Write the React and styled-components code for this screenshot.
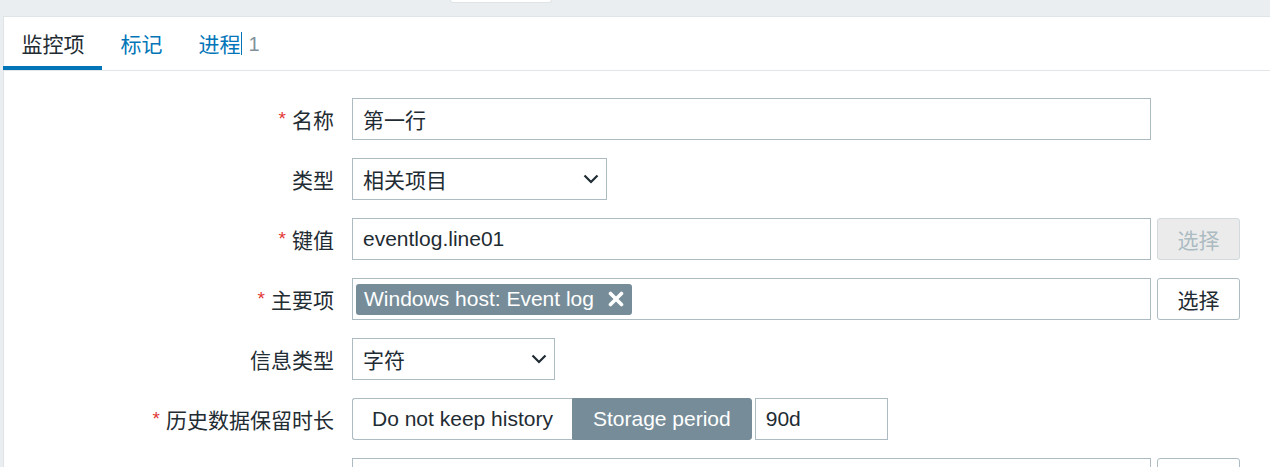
import React from 'react';
import styled, { createGlobalStyle } from 'styled-components';

const GlobalStyle = createGlobalStyle`
  html, body {
    margin: 0;
    padding: 0;
    background: #ebeef0;
    font-family: "Liberation Sans", "Noto Sans CJK SC", sans-serif;
    color: #1f2c33;
    overflow: hidden;
  }
`;

const TopStrip = styled.div`
  height: 16px;
  padding-left: 450px;
  box-sizing: border-box;
`;

const TopTab = styled.div`
  width: 100px;
  height: 2px;
  background: #ffffff;
  border: 1px solid #dfe4e7;
  border-top: none;
  border-radius: 0 0 3px 3px;
`;

const Panel = styled.div`
  margin-left: 3px;
  background: #ffffff;
  border-top: 1px solid #dfe4e7;
  border-left: 1px solid #dfe4e7;
  min-height: 460px;
`;

const TabBar = styled.div`
  display: flex;
  height: 54px;
  box-sizing: border-box;
  border-bottom: 1px solid #e3e6e8;
  margin-left: -1px;
`;

const Tab = styled.div`
  display: flex;
  align-items: center;
  height: 53px;
  box-sizing: border-box;
  padding: 3px 17.5px 0 18.5px;
  font-size: 21px;
  color: ${(p) => (p.$active ? '#1f2c33' : '#0275b8')};
  border-bottom: 4px solid ${(p) => (p.$active ? '#0275b8' : 'transparent')};
`;

const Caret = styled.span`
  display: inline-block;
  width: 1px;
  height: 23px;
  background: #0275b8;
  margin: 0 7px 0 0;
`;

const Count = styled.span`
  color: #7f929c;
  font-size: 20px;
  padding-top: 2px;
`;

const Form = styled.div`
  display: grid;
  grid-template-columns: 330px 1fr;
  column-gap: 18px;
  row-gap: 18px;
  padding-top: 27px;
  align-items: center;
`;

const Label = styled.div`
  display: flex;
  justify-content: flex-end;
  align-items: center;
  font-size: 21px;
  height: 42px;
`;

const Required = styled.span`
  color: #e33734;
  font-size: 19px;
  line-height: 19px;
  margin-right: 6px;
  align-self: flex-start;
  margin-top: 11px;
`;

const Field = styled.div`
  display: flex;
  align-items: center;
  gap: ${(p) => p.$gap || 6}px;
`;

const Box = styled.div`
  display: flex;
  align-items: center;
  width: ${(p) => p.$w}px;
  height: 42px;
  box-sizing: border-box;
  border: 1px solid #acbbc2;
  background: #ffffff;
  padding: 0 10px;
  font-size: 21px;
  color: #1f2c33;
  white-space: nowrap;
`;

const Select = styled(Box)`
  justify-content: space-between;
  padding-right: 7px;
`;

const MultiBox = styled(Box)`
  padding: 0 3px;
`;

const Tag = styled.div`
  display: flex;
  align-items: center;
  gap: 14px;
  height: 31px;
  padding: 0 8px 0 8px;
  background: #768d99;
  color: #ffffff;
  border-radius: 3px;
  font-size: 21px;
`;

const Button = styled.div`
  display: flex;
  align-items: center;
  justify-content: center;
  width: 83px;
  height: 42px;
  box-sizing: border-box;
  border-radius: 3px;
  font-size: 21px;
  border: 1px solid ${(p) => (p.$disabled ? '#d3dade' : '#acbbc2')};
  background: ${(p) => (p.$disabled ? '#ebebeb' : '#ffffff')};
  color: ${(p) => (p.$disabled ? '#acbbc2' : '#1f2c33')};
`;

const Segments = styled.div`
  display: flex;
  height: 42px;
`;

const Segment = styled.div`
  display: flex;
  align-items: center;
  padding: 0 ${(p) => (p.$first ? 19 : 20)}px;
  font-size: 21px;
  box-sizing: border-box;
  border: 1px solid ${(p) => (p.$on ? '#768d99' : '#acbbc2')};
  background: ${(p) => (p.$on ? '#768d99' : '#ffffff')};
  color: ${(p) => (p.$on ? '#ffffff' : '#1f2c33')};
  border-radius: ${(p) => (p.$first ? '3px 0 0 3px' : '0 3px 3px 0')};
  ${(p) => (p.$first ? 'border-right: none;' : '')}
`;

function Chevron() {
  return (
    <svg width="16" height="10" viewBox="0 0 16 10">
      <path d="M1.5 1.5 L8 8 L14.5 1.5" fill="none" stroke="#1f2c33" strokeWidth="2.2" />
    </svg>
  );
}

function Cross() {
  return (
    <svg width="16" height="16" viewBox="0 0 16 16">
      <path d="M2.5 2.5 L13.5 13.5 M13.5 2.5 L2.5 13.5" stroke="#ffffff" strokeWidth="3.6" strokeLinecap="round" />
    </svg>
  );
}

function FormLabel({ required, children }) {
  return (
    <Label>
      {required && <Required>*</Required>}
      {children}
    </Label>
  );
}

export default function App() {
  return (
    <>
      <GlobalStyle />
      <TopStrip>
        <TopTab />
      </TopStrip>
      <Panel>
        <TabBar>
          <Tab $active>监控项</Tab>
          <Tab>标记</Tab>
          <Tab>
            进程<Caret />
            <Count>1</Count>
          </Tab>
        </TabBar>
        <Form>
          <FormLabel required>名称</FormLabel>
          <Field>
            <Box $w={799}>第一行</Box>
          </Field>

          <FormLabel>类型</FormLabel>
          <Field>
            <Select $w={255}>
              相关项目
              <Chevron />
            </Select>
          </Field>

          <FormLabel required>键值</FormLabel>
          <Field>
            <Box $w={799}>eventlog.line01</Box>
            <Button $disabled>选择</Button>
          </Field>

          <FormLabel required>主要项</FormLabel>
          <Field>
            <MultiBox $w={799}>
              <Tag>
                Windows host: Event log
                <Cross />
              </Tag>
            </MultiBox>
            <Button>选择</Button>
          </Field>

          <FormLabel>信息类型</FormLabel>
          <Field>
            <Select $w={203}>
              字符
              <Chevron />
            </Select>
          </Field>

          <FormLabel required>历史数据保留时长</FormLabel>
          <Field $gap={3}>
            <Segments>
              <Segment $first>Do not keep history</Segment>
              <Segment $on>Storage period</Segment>
            </Segments>
            <Box $w={133}>90d</Box>
          </Field>

          <FormLabel />
          <Field>
            <Box $w={799} />
            <Button />
          </Field>
        </Form>
      </Panel>
    </>
  );
}
